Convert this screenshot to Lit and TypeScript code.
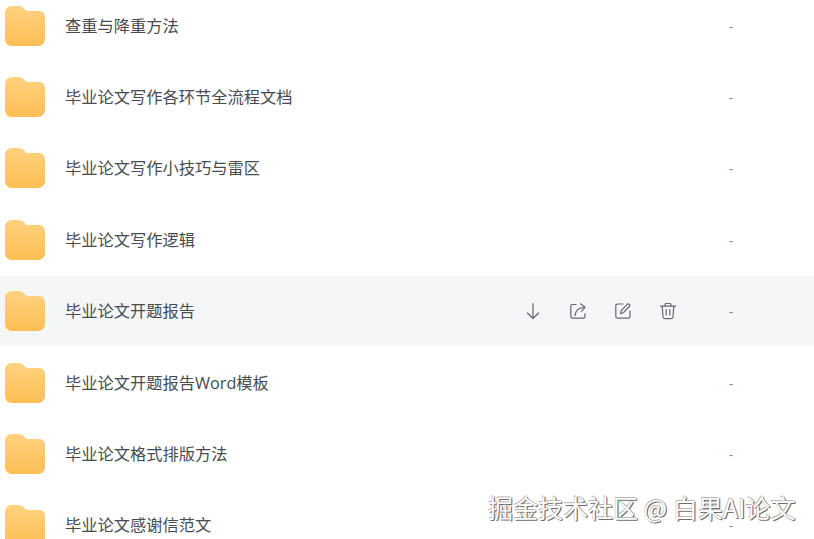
import { LitElement, html, css, svg } from "lit";
import { customElement } from "lit/decorators.js";

const rows = [
  "查重与降重方法",
  "毕业论文写作各环节全流程文档",
  "毕业论文写作小技巧与雷区",
  "毕业论文写作逻辑",
  "毕业论文开题报告",
  "毕业论文开题报告Word模板",
  "毕业论文格式排版方法",
  "毕业论文感谢信范文",
];

const folder = svg`<svg class="folder" viewBox="0 0 40 40" width="40" height="40" aria-hidden="true">
  <defs><linearGradient id="fg" x1="0" y1="0" x2="0" y2="1">
    <stop offset="0" stop-color="#ffd27f"/><stop offset="1" stop-color="#ffbe55"/>
  </linearGradient></defs>
  <path fill="url(#fg)" d="M7 0H13C16.5 0 18 1.2 19.5 3C20.6 4.4 21.6 5 23.5 5H34C37.5 5 40 7.5 40 11V33C40 37 37 40 33 40H7C3 40 0 37 0 33V7C0 3 3 0 7 0Z"/>
</svg>`;

const icon = (body: unknown) => html`<svg class="icon" viewBox="0 0 20 20" width="20" height="20" fill="none" stroke="#63676d" stroke-width="1.2" stroke-linecap="round" stroke-linejoin="round" aria-hidden="true">${body}</svg>`;

const icons = [
  svg`<path d="M10 2.5V17.5M4.5 12L10 17.5L15.5 12"/>`,
  svg`<path d="M8 3.5H4.5C3.4 3.5 2.8 4.1 2.8 5.2V15.5C2.8 16.6 3.4 17.2 4.5 17.2H15.3C16.4 17.2 17 16.6 17 15.5V12.5M7 14.5C7.5 9.5 10 7 15.5 6.5M12.5 2.8L17 6.3L13.5 10.3"/>`,
  svg`<path d="M10 3H4.6C3.5 3 2.8 3.7 2.8 4.8V15.4C2.8 16.5 3.5 17.2 4.6 17.2H15.2C16.3 17.2 17 16.5 17 15.4V10M7.6 12.6L8.2 9.6L14.2 3.4C14.9 2.7 15.8 2.7 16.4 3.3C17 3.9 17 4.8 16.3 5.5L10.4 11.7Z"/>`,
  svg`<path d="M2.5 5.2H17.5M7 5V3.6C7 2.9 7.4 2.5 8.1 2.5H11.9C12.6 2.5 13 2.9 13 3.6V5M4.2 5.2L5 16C5.1 17 5.7 17.6 6.7 17.6H13.3C14.3 17.6 14.9 17 15 16L15.8 5.2M8.2 8.5V14M11.8 8.5V14"/>`,
];

@customElement("app-root")
export class AppRoot extends LitElement {
  static styles = css`
    :host {
      display: block;
      position: relative;
      width: 814px;
      height: 539px;
      overflow: hidden;
      background: #fff;
      font-family: "Open Sans", "Noto Sans CJK SC", "Liberation Sans", sans-serif;
    }
    .list {
      display: flex;
      flex-direction: column;
      gap: 1.4px;
      margin-top: -9.4px;
    }
    .row {
      display: flex;
      align-items: center;
      height: 70px;
      flex: none;
      padding-left: 5px;
      box-sizing: border-box;
    }
    .row.active {
      background: #f4f6f8;
    }
    .folder {
      flex: none;
    }
    .name {
      flex: none;
      width: 445px;
      margin-left: 20px;
      font-size: 16.25px;
      line-height: 24px;
      font-weight: 400;
      color: #484c52;
      white-space: nowrap;
    }
    .actions {
      flex: none;
      display: flex;
      gap: 25px;
      width: 195px;
      margin-left: 12.5px;
      height: 20px;
    }
    .icon {
      display: block;
      flex: none;
    }
    .dash {
      font-size: 14px;
      line-height: 20px;
      color: #8a8f96;
      width: 8px;
      margin-left: 9.5px;
      margin-top: 2px;
      text-align: center;
    }
    .mark {
      position: absolute;
      left: 488px;
      top: 489px;
      font-size: 25px;
      line-height: 36px;
      white-space: nowrap;
      color: #fff;
      font-family: "Noto Sans CJK SC", sans-serif;
      text-shadow:
        1px 1px 0 #6f6f6f,
        -0.6px -0.6px 0 #b5b5b5,
        1px 0 1px #8a8a8a;
    }
  `;

  render() {
    return html`
      <div class="list">
        ${rows.map(
          (r, i) => html`<div class="row ${i === 4 ? "active" : ""}">
            ${folder}
            <div class="name">${r}</div>
            <div class="actions">${i === 4 ? icons.map((b) => icon(b)) : ""}</div>
            <div class="dash">-</div>
          </div>`
        )}
      </div>
      <div class="mark">掘金技术社区 @ 白果AI论文</div>
    `;
  }
}
